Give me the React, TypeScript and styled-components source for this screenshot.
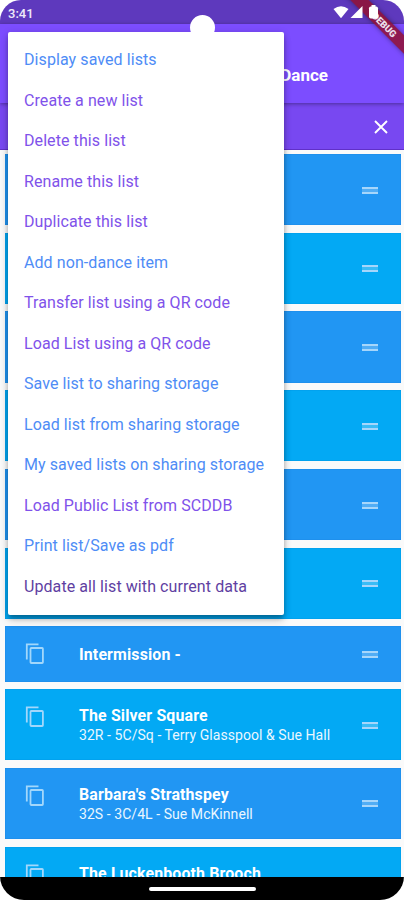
import React from "react";
import styled, { createGlobalStyle } from "styled-components";

const GlobalStyle = createGlobalStyle`
  * { box-sizing: border-box; }
  html, body { margin: 0; background: #fff; }
  body { font-family: Roboto, "Liberation Sans", sans-serif; overflow: hidden; }
`;

const Phone = styled.div`
  position: relative;
  width: 404px;
  height: 900px;
  display: flex;
  flex-direction: column;
  overflow: hidden;
  border-radius: 21px 21px 24px 24px;
  background: #fafafa;
`;

const StatusBar = styled.header`
  flex: none;
  height: 24px;
  display: flex;
  align-items: center;
  justify-content: space-between;
  padding: 2px 24px 0 8px;
  background: #5e39bd;
  color: #eee9fa;
  font-size: 13px;
  font-weight: 500;
`;

const StatusIcons = styled.svg`
  position: relative;
  z-index: 6;
  width: 47px;
  height: 14px;
  margin-bottom: 2px;
`;

const AppBar = styled.div`
  position: relative;
  z-index: 1;
  flex: none;
  height: 79px;
  display: flex;
  align-items: center;
  justify-content: flex-end;
  padding: 23px 76px 0 0;
  background: #7c4dff;
  box-shadow: 0 1px 4px rgba(0, 0, 0, 0.38);
  color: #fff;
  font-size: 17px;
  font-weight: 700;
`;

const FilterBar = styled.div`
  flex: none;
  height: 47px;
  display: flex;
  align-items: center;
  justify-content: flex-end;
  padding: 1px 15px 0 0;
  background: #7848f1;
  border-bottom: 1px solid #6030c8;
`;

const CloseIcon = styled.svg`
  width: 16px;
  height: 16px;
`;

const List = styled.main`
  flex: 1;
  min-height: 0;
  overflow: hidden;
  display: flex;
  flex-direction: column;
  gap: 7.6px;
  padding: 4px 3.5px 0 4.5px;
`;

const Card = styled.article<{ $alt?: boolean; $short?: boolean }>`
  flex: none;
  height: ${(p) => (p.$short ? 55.2 : 71.15)}px;
  display: grid;
  grid-template-columns: 54px 1fr 16px;
  align-items: center;
  padding: 0 22.5px 0 20.5px;
  background: ${(p) => (p.$alt ? "#03a9f4" : "#2196f3")};
  box-shadow: inset 0 0 1px rgba(0, 60, 160, 0.55);
  color: #fff;
`;

const CopyIcon = styled.svg`
  align-self: start;
  width: 20px;
  height: 22px;
  margin-top: 17px;
`;

const Title = styled.h2`
  margin: 0;
  font-size: 15.9px;
  letter-spacing: 0.15px;
  line-height: 19px;
  font-weight: 700;
  white-space: nowrap;
`;

const Detail = styled.p`
  margin: 0 0 -2px;
  padding-top: 1px;
  font-size: 14px;
  letter-spacing: 0.06px;
  line-height: 19px;
  white-space: nowrap;
  color: #eaf7ff;
`;

const Handle = styled.div`
  height: 7px;
  margin-top: 1px;
  border: solid #a6d6fb;
  border-width: 2px 0;
  background: rgba(255, 255, 255, 0.22);
`;

const NavBar = styled.footer`
  flex: none;
  height: 23px;
  display: flex;
  justify-content: center;
  align-items: center;
  background: #000;
`;

const HomeLine = styled.div`
  width: 107px;
  height: 4px;
  border-radius: 2px;
  background: #fff;
`;

const Menu = styled.nav`
  position: absolute;
  z-index: 3;
  left: 8px;
  top: 32px;
  width: 275.5px;
  height: 583px;
  padding-top: 7.4px;
  border-radius: 2px;
  background: #fff;
  box-shadow: 0 4px 4px -1px rgba(0, 0, 0, 0.22), 0 6px 8px rgba(0, 0, 0, 0.14),
    0 1px 7px rgba(0, 0, 0, 0.16);
`;

const MenuItem = styled.div<{ $color: string }>`
  height: 40.5px;
  padding-left: 16px;
  display: flex;
  align-items: center;
  color: ${(p) => p.$color};
  font-size: 16px;
  letter-spacing: 0.08px;
  white-space: nowrap;
`;

const Camera = styled.div`
  position: absolute;
  z-index: 4;
  left: 190px;
  top: 15px;
  width: 25px;
  height: 25px;
  border-radius: 50%;
  background: #fff;
`;

const DebugRibbon = styled.div`
  position: absolute;
  z-index: 5;
  right: -44px;
  top: 16.5px;
  width: 130px;
  height: 13px;
  padding-left: 4px;
  transform: rotate(45deg);
  background: rgba(145, 15, 48, 0.84);
  box-shadow: 0 0 5px rgba(0, 0, 0, 0.4);
  color: #ece0ec;
  text-align: center;
  font-size: 9.5px;
  line-height: 13px;
  font-weight: 900;
`;

const BLUE = "#4e8cf6";
const VIOLET = "#8052ea";
const DEEP = "#5f3fa2";

const menuItems = [
  { label: "Display saved lists", color: BLUE },
  { label: "Create a new list", color: VIOLET },
  { label: "Delete this list", color: VIOLET },
  { label: "Rename this list", color: VIOLET },
  { label: "Duplicate this list", color: VIOLET },
  { label: "Add non-dance item", color: BLUE },
  { label: "Transfer list using a QR code", color: VIOLET },
  { label: "Load List using a QR code", color: VIOLET },
  { label: "Save list to sharing storage", color: BLUE },
  { label: "Load list from sharing storage", color: BLUE },
  { label: "My saved lists on sharing storage", color: BLUE },
  { label: "Load Public List from SCDDB", color: VIOLET },
  { label: "Print list/Save as pdf", color: BLUE },
  { label: "Update all list with current data", color: DEEP },
];

const dances: { title?: string; detail?: string; short?: boolean }[] = [
  {},
  {},
  {},
  {},
  {},
  {},
  { title: "Intermission -", short: true },
  { title: "The Silver Square", detail: "32R - 5C/Sq - Terry Glasspool & Sue Hall" },
  { title: "Barbara's Strathspey", detail: "32S - 3C/4L - Sue McKinnell" },
  { title: "The Luckenbooth Brooch", detail: "" },
];

export default function App() {
  return (
    <>
      <GlobalStyle />
      <Phone>
        <StatusBar>
          <span>3:41</span>
          <StatusIcons viewBox="0 0 47 14" fill="#fff">
            <path d="M0.5 4Q8 -1.5 15.5 4L8 13.2Z" />
            <path d="M17.5 13 29.5 1V13Z" />
            <rect x="36" y="1.5" width="9" height="12" rx="1.8" />
            <rect x="38.5" y="0" width="4" height="3" />
          </StatusIcons>
        </StatusBar>
        <AppBar>Dance</AppBar>
        <FilterBar>
          <CloseIcon viewBox="0 0 16 16" stroke="#fff" strokeWidth="1.9">
            <path d="M2 2 14 14M14 2 2 14" />
          </CloseIcon>
        </FilterBar>
        <List>
          {dances.map((dance, i) => (
            <Card key={i} $alt={i % 2 === 1} $short={dance.short}>
              <CopyIcon viewBox="0 0 20 22" fill="none" stroke="#a2d7fb" strokeWidth="1.8">
                <path d="M1.8 16.5V1.4H13.5" />
                <rect x="5.5" y="5" width="12.4" height="15" rx="0.8" />
              </CopyIcon>
              <div>
                {dance.title && <Title>{dance.title}</Title>}
                {dance.detail !== undefined && <Detail>{dance.detail || "\u00a0"}</Detail>}
              </div>
              <Handle />
            </Card>
          ))}
        </List>
        <NavBar>
          <HomeLine />
        </NavBar>
        <Menu>
          {menuItems.map((item) => (
            <MenuItem key={item.label} $color={item.color}>
              {item.label}
            </MenuItem>
          ))}
        </Menu>
        <Camera />
        <DebugRibbon>DEBUG</DebugRibbon>
      </Phone>
    </>
  );
}
